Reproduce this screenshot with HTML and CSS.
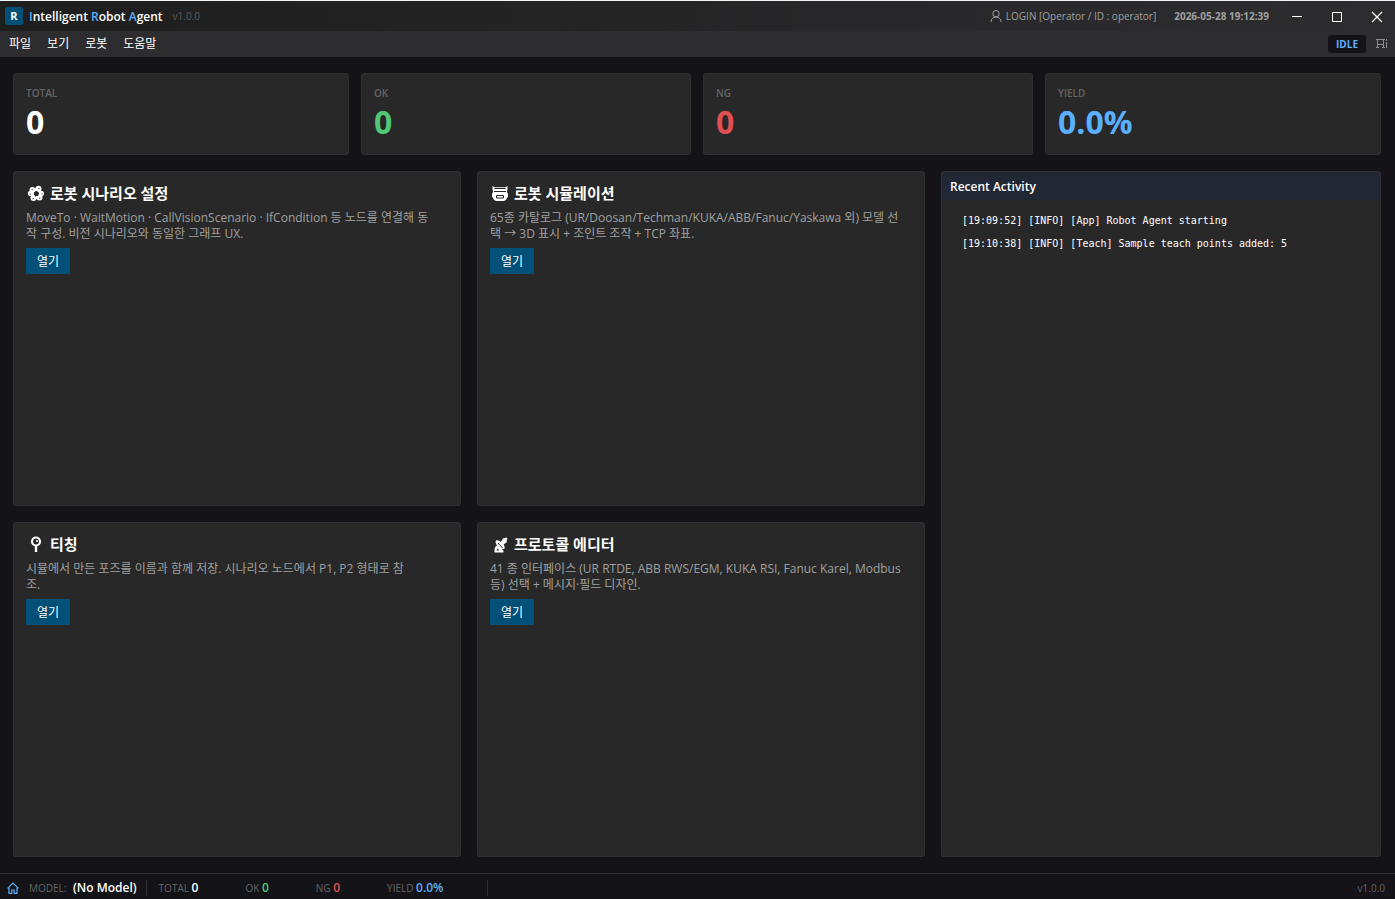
FILE: index.html
```
<!DOCTYPE html>
<html lang="ko">

<head>
    <meta charset="UTF-8">
    <meta name="viewport" content="width=device-width, initial-scale=1.0">
    <title>Intelligent Robot Agent</title>
    <link rel="stylesheet" href="styles.css">
</head>

<body>

    <header class="titlebar">
        <span class="logo">R</span>
        <h1 class="app-name"><b>I</b>ntelligent <b>R</b>obot <b>A</b>gent</h1>
        <span class="app-version">v1.0.0</span>
        <div class="session">
            <button type="button" class="login">
                <svg width="12" height="12" viewBox="0 0 12 12" fill="none" stroke="currentColor">
                    <circle cx="6" cy="3.7" r="3.2" />
                    <path d="M1 12c0-3 2-5 5-5s5 2 5 5" />
                </svg>
                LOGIN [Operator / ID : operator]
            </button>
            <time class="clock">2026-05-28 19:12:39</time>
        </div>
        <div class="window-buttons">
            <button type="button" aria-label="Minimize">
                <svg width="12" height="12" viewBox="0 0 12 12" stroke="currentColor"><path d="M1 5.5h10" /></svg>
            </button>
            <button type="button" aria-label="Maximize">
                <svg width="12" height="12" viewBox="0 0 12 12" fill="none" stroke="currentColor"><path d="M1.5 1.5h9v9h-9z" /></svg>
            </button>
            <button type="button" aria-label="Close">
                <svg width="12" height="12" viewBox="0 0 12 12" stroke="currentColor" stroke-width="1.3"><path d="M1 1l10 10M11 1L1 11" /></svg>
            </button>
        </div>
    </header>

    <nav class="menubar">
        <button type="button">파일</button>
        <button type="button">보기</button>
        <button type="button">로봇</button>
        <button type="button">도움말</button>
        <span class="state">IDLE</span>
        <svg class="device" width="12" height="12" viewBox="0 0 12 12" fill="none" stroke="currentColor">
            <path d="M0 1.5h9M1.5 1v9M7.5 1v9M2 6.5h5M0 9.5h3M6 9.5h3M10.5 1v2M10.5 4v6" />
        </svg>
    </nav>

    <main>
        <section class="stats">
            <div class="stat">
                <span class="stat-label">TOTAL</span>
                <span class="stat-value">0</span>
            </div>
            <div class="stat">
                <span class="stat-label">OK</span>
                <span class="stat-value ok">0</span>
            </div>
            <div class="stat">
                <span class="stat-label">NG</span>
                <span class="stat-value ng">0</span>
            </div>
            <div class="stat">
                <span class="stat-label">YIELD</span>
                <span class="stat-value yield">0.0%</span>
            </div>
        </section>

        <div class="dashboard">
            <section class="cards">
                <article class="card">
                    <h2>
                        <svg width="20" height="18" viewBox="0 -1 20 18">
                            <g fill="#fff">
                                <circle cx="6.5" cy="5" r="3" />
                                <circle cx="12.5" cy="3.8" r="3" />
                                <circle cx="4.6" cy="8.5" r="2.7" />
                                <circle cx="15.3" cy="8.5" r="2.7" />
                                <circle cx="7.5" cy="13" r="3" />
                                <circle cx="13.5" cy="12.5" r="3" />
                            </g>
                            <circle cx="10.2" cy="8.6" r="4" fill="none" stroke="#fff" stroke-width="3" />
                            <path d="M8 7.500l2.500-1.500 2.500 2-1 3-3 .5z" fill="#282828" />
                            <g fill="#282828">
                                <circle cx="6.2" cy="4.6" r=".6" />
                                <circle cx="12.9" cy="3.4" r=".6" />
                                <circle cx="4.2" cy="9" r=".6" />
                                <circle cx="16" cy="8.8" r=".6" />
                                <circle cx="7.1" cy="13.700" r=".6" />
                                <circle cx="13.800" cy="13.200" r=".6" />
                            </g>
                        </svg>
                        로봇 시나리오 설정
                    </h2>
                    <p>MoveTo · WaitMotion · CallVisionScenario · IfCondition 등 노드를 연결해 동<br>작 구성. 비전 시나리오와 동일한 그래프 UX.</p>
                    <button type="button" class="open">열기</button>
                </article>

                <article class="card">
                    <h2>
                        <svg width="20" height="18" viewBox="0 -1 20 18">
                            <path d="M2.5 1l2 1.200h11l2-1.200v4l-.5.5v1.500l1 2v3l-1 .5c-.3 2.200-1.800 3.500-4 3.500H7c-2.200 0-3.700-1.300-4-3.500L2 12V9l1-2V5.500L2.500 5z" fill="#fff" />
                            <path d="M4.500 3.500h11M4 6.500h12" stroke="#282828" fill="none" />
                            <path d="M6.500 10.500h7V13h-7z" stroke="#282828" fill="#fff" />
                        </svg>
                        로봇 시뮬레이션
                    </h2>
                    <p>65종 카탈로그 (UR/Doosan/Techman/KUKA/ABB/Fanuc/Yaskawa 외) 모델 선<br>택 → 3D 표시 + 조인트 조작 + TCP 좌표.</p>
                    <button type="button" class="open">열기</button>
                </article>

                <article class="card">
                    <h2>
                        <svg width="20" height="18" viewBox="0 -1 20 18" fill="none" stroke="#fff">
                            <circle cx="10" cy="5.5" r="4" stroke-width="2.2" />
                            <path d="M10 10v6" stroke-width="2.4" />
                            <path d="M10 5h2" stroke-width="1.6" />
                        </svg>
                        티칭
                    </h2>
                    <p>시뮬에서 만든 포즈를 이름과 함께 저장. 시나리오 노드에서 P1, P2 형태로 참<br>조.</p>
                    <button type="button" class="open">열기</button>
                </article>

                <article class="card">
                    <h2>
                        <svg width="20" height="18" viewBox="0 -1 20 18">
                            <path d="M6 4.5c2-.8 3.500 0 4.800 1.500L13 2.500l3.500-1 1 1.200-1 2.300.5 1-3.500 2.500c1.200 1.500 1.500 3 .8 4.500-3 .3-6-1-7.300-3.500S5 6 6 4.500z" fill="#fff" />
                            <path d="M8 7l4.500 5" stroke="#282828" />
                            <path d="M6 9.500L4.500 13v3.500h9V15l-2-2.500" fill="#fff" />
                            <path d="M6.500 14.500l1-2 2 2z" fill="#282828" />
                        </svg>
                        프로토콜 에디터
                    </h2>
                    <p>41 종 인터페이스 (UR RTDE, ABB RWS/EGM, KUKA RSI, Fanuc Karel, Modbus<br>등) 선택 + 메시지·필드 디자인.</p>
                    <button type="button" class="open">열기</button>
                </article>
            </section>

            <section class="activity">
                <h2>Recent Activity</h2>
                <ul>
                    <li>[19:09:52] [INFO] [App] Robot Agent starting</li>
                    <li>[19:10:38] [INFO] [Teach] Sample teach points added: 5</li>
                </ul>
            </section>
        </div>
    </main>

    <footer class="statusbar">
        <svg class="home" width="12" height="12" viewBox="0 0 12 12" fill="none" stroke="currentColor" stroke-width="1.2">
            <path d="M.6 6.4L6 1l5.4 5.4M2 5.5v5.9h2.8V8h2.4v3.4H10V5.5" />
        </svg>
        <div class="model">MODEL: <strong>(No Model)</strong></div>
        <div class="counters">
            <div>TOTAL <strong>0</strong></div>
            <div>OK <strong class="ok">0</strong></div>
            <div>NG <strong class="ng">0</strong></div>
            <div>YIELD <strong class="yield">0.0%</strong></div>
        </div>
        <span class="version">v1.0.0</span>
    </footer>

</body>

</html>
```
FILE: styles.css
```
* {
    box-sizing: border-box;
}

body {
    margin: 0;
    min-height: 100vh;
    display: flex;
    flex-direction: column;
    background: #141418;
    color: #fff;
    font-family: "Open Sans", "Noto Sans CJK KR", sans-serif;
    font-size: 12px;
    line-height: 16px;
}

h1,
h2,
p,
ul {
    margin: 0;
    padding: 0;
}

button {
    border: none;
    padding: 0;
    background: none;
    color: inherit;
    font: inherit;
    cursor: pointer;
}

svg {
    flex: none;
}

.ok {
    color: #50c878;
}

.ng {
    color: #e05050;
}

.yield {
    color: #5aafff;
}

/* Title bar */
.titlebar {
    display: flex;
    align-items: center;
    height: 31px;
    padding-left: 5px;
    border-top: 1px solid #f0f6f4;
    background: linear-gradient(90deg, #1e1e1e, #2d2d30);
}

.logo {
    width: 18px;
    height: 18px;
    border-radius: 2px;
    background: #005078;
    font-size: 11px;
    font-weight: 700;
    line-height: 18px;
    text-align: center;
}

.app-name {
    margin-left: 6px;
    padding-top: 1px;
    font-size: 12px;
    font-weight: 600;
}

.app-name b {
    color: #5aafff;
    font-weight: 600;
}

.app-version {
    margin-left: 10px;
    color: #5c5c5c;
    font-size: 10px;
}

.session {
    display: flex;
    align-items: center;
    gap: 18px;
    margin-left: auto;
    color: #a0a0a0;
    font-size: 10px;
}

.login {
    display: flex;
    align-items: center;
    gap: 4px;
}

.clock {
    font-weight: 700;
}

.window-buttons {
    display: flex;
    margin-left: 8px;
    margin-right: -2px;
}

.window-buttons button {
    display: flex;
    align-items: center;
    justify-content: center;
    width: 40px;
    height: 30px;
    padding-top: 1px;
}

/* Menu */
.menubar {
    display: flex;
    align-items: center;
    gap: 16px;
    height: 26px;
    padding: 0 7px 0 9px;
    background: #2d2d30;
}

.state {
    margin-left: auto;
    padding: 0 8px;
    border-radius: 3px;
    background: #141418;
    color: #5aafff;
    font-size: 10px;
    font-weight: 700;
    line-height: 18px;
}

.device {
    margin-left: -6px;
    color: #8c8c8c;
}

/* Dashboard */
main {
    flex: 1;
    display: flex;
    flex-direction: column;
    gap: 16px;
    padding: 16px 14px 16px 13px;
}

.stats {
    display: grid;
    grid-template-columns: repeat(4, 1fr);
}

.stat,
.card,
.activity {
    border: 1px solid #303030;
    border-radius: 3px;
    background: #282828;
}

.stat {
    display: flex;
    flex-direction: column;
    margin: 0 6px;
    padding: 12px 12px 11px;
}

.stat:first-child {
    margin-left: 0;
}

.stat:last-child {
    margin-right: 0;
}

.stat-label {
    color: #646464;
    font-size: 10px;
    font-weight: 600;
    line-height: 15px;
}

.stat-value {
    font-size: 32px;
    font-weight: 700;
    line-height: 42px;
}

.dashboard {
    flex: 1;
    display: grid;
    grid-template-columns: 2fr 1fr;
}

.cards {
    display: grid;
    grid-template-columns: 1fr 1fr;
    grid-auto-rows: 1fr;
    gap: 16px;
}

.card {
    padding: 12px;
}

.card h2 {
    display: flex;
    align-items: center;
    gap: 4px;
    font-size: 15px;
    font-weight: 600;
    line-height: 18px;
}

.card p {
    margin: 8px 0 6px;
    color: #a0a0a0;
}

.open {
    width: 44px;
    height: 26px;
    padding-top: 1px;
    background: #005078;
}

.activity {
    margin-left: 16px;
    overflow: hidden;
}

.activity h2 {
    padding: 7px 8px 5px;
    background: #222736;
    font-size: 12px;
    font-weight: 600;
}

.activity ul {
    padding: 9px 20px;
    list-style: none;
    font-family: "DejaVu Sans Mono", monospace;
    font-size: 10px;
    line-height: 23px;
}

/* Status bar */
.statusbar {
    display: flex;
    align-items: center;
    height: 26px;
    padding: 3px 10px 0 7px;
    border-top: 1px solid #303034;
    color: #646464;
    font-size: 10px;
}

.statusbar strong {
    color: #fff;
    font-size: 12px;
    font-weight: 600;
}

.statusbar .ok {
    color: #50c878;
}

.statusbar .ng {
    color: #e05050;
}

.statusbar .yield {
    color: #5aafff;
}

.home {
    color: #5aafff;
}

.model {
    margin-left: 10px;
}

.model strong {
    margin-left: 4px;
}

.counters {
    display: flex;
    gap: 47px;
    margin-left: 9px;
    padding: 0 44px 0 12px;
    border-left: 1px solid #303034;
    border-right: 1px solid #303034;
}

.version {
    margin-left: auto;
}
```
